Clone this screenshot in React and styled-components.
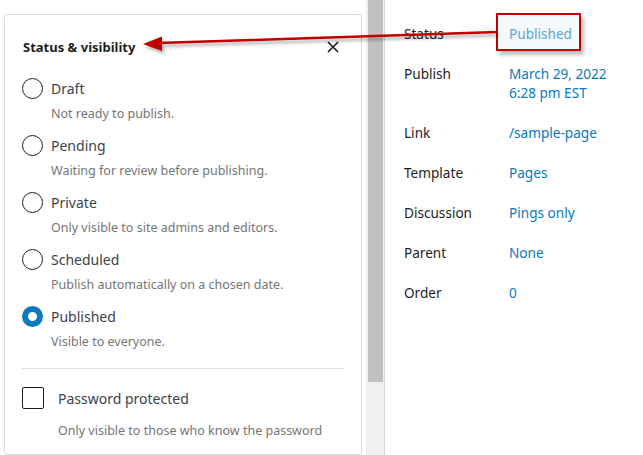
import React from 'react';
import styled, { createGlobalStyle } from 'styled-components';

const GlobalStyle = createGlobalStyle`
  html, body {
    margin: 0;
    padding: 0;
    background: #ffffff;
  }
  body {
    font-family: "Noto Sans", "Open Sans", sans-serif;
    color: #1e1e1e;
  }
`;

const Page = styled.div`
  position: relative;
  display: flex;
  width: 643px;
  height: 455px;
  overflow: hidden;
  background: #ffffff;
`;

const LeftColumn = styled.div`
  width: 358px;
  padding: 14px 4px 0 4px;
  flex-shrink: 0;
`;

const Popover = styled.div`
  border: 1px solid #dcdcde;
  border-radius: 3px;
  padding: 20px 17px 0 17px;
  height: 100%;
  box-sizing: border-box;
`;

const Header = styled.div`
  display: flex;
  align-items: center;
  justify-content: space-between;
  height: 24px;
  margin-bottom: 19px;
  padding-left: 1px;
`;

const Title = styled.h2`
  margin: 0;
  font-size: 13px;
  font-weight: 700;
  color: #1e1e1e;
`;

const CloseButton = styled.button`
  border: 0;
  background: none;
  padding: 0;
  width: 20px;
  height: 20px;
  margin-right: 1px;
  display: flex;
  align-items: center;
  justify-content: center;
`;

const OptionList = styled.div`
  display: flex;
  flex-direction: column;
  gap: 13px;
`;

const Option = styled.div`
  display: grid;
  grid-template-columns: 29px 1fr;
  row-gap: 6px;
  align-items: center;
`;

const Radio = styled.span`
  width: 21px;
  height: 21px;
  box-sizing: border-box;
  border-radius: 50%;
  border: ${p => (p.$checked ? '6px solid #0b7ac0' : '1.5px solid #1e1e1e')};
  background: #ffffff;
`;

const OptionLabel = styled.span`
  font-size: 14px;
  color: #3c434a;
`;

const Help = styled.span`
  grid-column: 2;
  font-size: 12.5px;
  color: #757575;
`;

const Divider = styled.hr`
  border: 0;
  border-top: 1px solid #e0e0e0;
  margin: 18px 0 18px 0;
`;

const CheckRow = styled.div`
  display: grid;
  grid-template-columns: 36px 1fr;
  row-gap: 13px;
  align-items: center;
`;

const Checkbox = styled.span`
  width: 22px;
  height: 22px;
  box-sizing: border-box;
  border: 1.5px solid #1e1e1e;
  border-radius: 2px;
`;

const Scrollbar = styled.div`
  width: 19px;
  background: #f0f0f0;
  border-right: 1px solid #d4d4d4;
  flex-shrink: 0;
  padding: 0 1px 0 2px;
  box-sizing: border-box;
`;

const Thumb = styled.div`
  height: 382px;
  background: #c1c1c1;
`;

const Summary = styled.div`
  flex: 1;
  padding: 24px 0 0 19px;
  display: flex;
  flex-direction: column;
  gap: 21px;
`;

const Row = styled.div`
  display: grid;
  grid-template-columns: 105px 1fr;
  font-size: 13.6px;
  line-height: 19px;
`;

const RowLabel = styled.span`
  color: #1e1e1e;
`;

const RowValue = styled.span`
  color: #0b7ac0;
`;

const Highlight = styled.div`
  position: absolute;
  left: 496px;
  top: 13px;
  width: 85px;
  height: 38px;
  box-sizing: border-box;
  border: 2px solid #c00000;
  background: rgba(225, 240, 250, 0.35);
  box-shadow: 3px 4px 4px rgba(0, 0, 0, 0.25);
`;

const Overlay = styled.svg`
  position: absolute;
  left: 0;
  top: 0;
  pointer-events: none;
`;

const options = [
  { label: 'Draft', help: 'Not ready to publish.' },
  { label: 'Pending', help: 'Waiting for review before publishing.' },
  { label: 'Private', help: 'Only visible to site admins and editors.' },
  { label: 'Scheduled', help: 'Publish automatically on a chosen date.' },
  { label: 'Published', help: 'Visible to everyone.', checked: true },
];

const rows = [
  ['Status', ['Published']],
  ['Publish', ['March 29, 2022', '6:28 pm EST']],
  ['Link', ['/sample-page']],
  ['Template', ['Pages']],
  ['Discussion', ['Pings only']],
  ['Parent', ['None']],
  ['Order', ['0']],
];

export default function App() {
  return (
    <>
      <GlobalStyle />
      <Page>
        <LeftColumn>
          <Popover>
            <Header>
              <Title>Status &amp; visibility</Title>
              <CloseButton aria-label="Close">
                <svg width="12" height="12" viewBox="0 0 12 12">
                  <path d="M1 1 L11 11 M11 1 L1 11" stroke="#1e1e1e" strokeWidth="1.7" />
                </svg>
              </CloseButton>
            </Header>
            <OptionList>
              {options.map(o => (
                <Option key={o.label}>
                  <Radio $checked={o.checked} />
                  <OptionLabel>{o.label}</OptionLabel>
                  <Help>{o.help}</Help>
                </Option>
              ))}
            </OptionList>
            <Divider />
            <CheckRow>
              <Checkbox />
              <OptionLabel>Password protected</OptionLabel>
              <Help>Only visible to those who know the password</Help>
            </CheckRow>
          </Popover>
        </LeftColumn>
        <Scrollbar>
          <Thumb />
        </Scrollbar>
        <Summary>
          {rows.map(([label, values]) => (
            <Row key={label}>
              <RowLabel>{label}</RowLabel>
              <RowValue>
                {values.map(v => (
                  <div key={v}>{v}</div>
                ))}
              </RowValue>
            </Row>
          ))}
        </Summary>
        <Highlight />
        <Overlay width="643" height="455">
          <defs>
            <filter id="shadow" x="-10%" y="-200%" width="120%" height="500%">
              <feDropShadow dx="2" dy="3" stdDeviation="1.5" floodColor="#000" floodOpacity="0.3" />
            </filter>
          </defs>
          <g filter="url(#shadow)">
            <line x1="158" y1="43" x2="497" y2="32" stroke="#c00000" strokeWidth="2.5" />
            <polygon points="143,44 162,36.5 162,51" fill="#c00000" />
          </g>
        </Overlay>
      </Page>
    </>
  );
}
